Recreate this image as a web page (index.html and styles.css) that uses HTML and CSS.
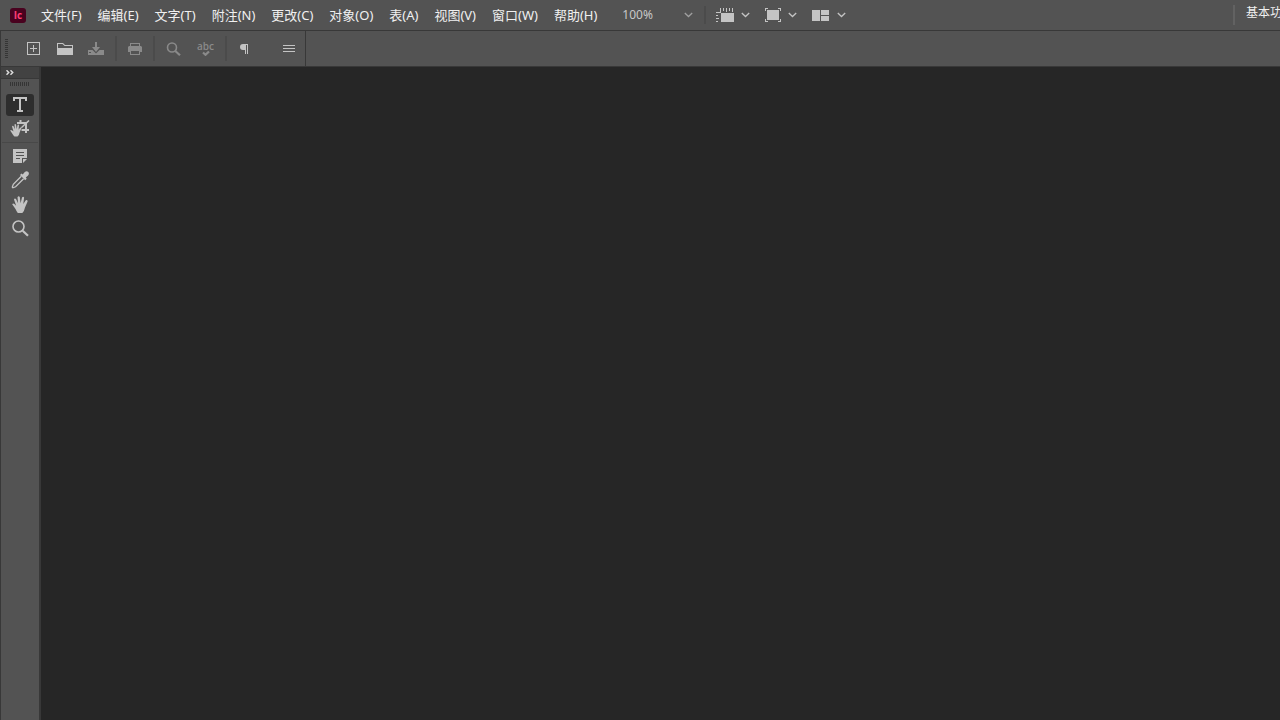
FILE: index.html
```html
<!DOCTYPE html>
<html lang="zh-CN">
<head>
<meta charset="utf-8">
<title>InCopy</title>
<link rel="stylesheet" href="styles.css">
</head>
<body>
<div class="app">
  <header class="menubar">
    <span class="logo">Ic</span>
    <nav class="menus">
      <button>文件(F)</button>
      <button>编辑(E)</button>
      <button>文字(T)</button>
      <button>附注(N)</button>
      <button>更改(C)</button>
      <button>对象(O)</button>
      <button>表(A)</button>
      <button>视图(V)</button>
      <button>窗口(W)</button>
      <button>帮助(H)</button>
    </nav>
    <button class="zoom" aria-label="缩放级别">
      <span>100%</span>
      <svg width="9" height="6" viewBox="0 0 9 6"><path class="line soft" d="M.8 1 4.5 4.5 8.2 1"/></svg>
    </button>
    <span class="divider"></span>
    <div class="views">
      <button aria-label="视图选项">
        <svg width="18" height="14" viewBox="0 0 18 14"><path d="M5 5h13v9H5zM0 4h4V0h1v5H0zM7 0h1v3H7zM10 0h1v4h-1zM13 0h1v3h-1zM16 0h1v4h-1zM0 7h2v1H0zM0 10h3v1H0zM0 13h2v1H0z"/></svg>
        <svg width="9" height="6" viewBox="0 0 9 6"><path class="line" d="M.8 1 4.5 4.5 8.2 1"/></svg>
      </button>
      <button aria-label="屏幕模式">
        <svg width="16" height="14" viewBox="0 0 16 14"><path d="M2 2h12v10H2zM0 0h3v1H1v2H0zM13 0h3v3h-1V1h-2zM0 11h1v2h2v1H0zM15 11h1v3h-3v-1h2z"/></svg>
        <svg width="9" height="6" viewBox="0 0 9 6"><path class="line" d="M.8 1 4.5 4.5 8.2 1"/></svg>
      </button>
      <button aria-label="排列文档">
        <svg width="17" height="11" viewBox="0 0 17 11"><path d="M0 0h8v11H0zM9 0h8v5H9zM9 6h8v5H9z"/></svg>
        <svg width="9" height="6" viewBox="0 0 9 6"><path class="line" d="M.8 1 4.5 4.5 8.2 1"/></svg>
      </button>
    </div>
    <button class="workspace"><span>基本功能</span></button>
  </header>

  <div class="toolbar">
    <span class="grip"></span>
    <div class="commands">
      <button aria-label="新建">
        <svg width="13" height="13" viewBox="0 0 13 13"><path fill-rule="evenodd" d="M0 0h13v13H0zM1 1v11h11V1zM6 3h1v3h3v1H7v3H6V7H3V6h3z"/></svg>
      </button>
      <button class="open" aria-label="打开">
        <svg width="16" height="12" viewBox="0 0 16 12"><path d="M0 0h6l2 2h8v3h-1V3H7.500L5.500 1H1v4H0zM1 5h15v7H0V5z"/></svg>
      </button>
      <button class="dim" aria-label="存储">
        <svg width="16" height="13" viewBox="0 0 16 13"><path fill-rule="evenodd" d="M7 0h2v5h3l-4 5-4-5h3zM0 8h4.500L8 11.500 11.500 8H16v5H0zM1 10v1h2v-1z"/></svg>
      </button>
    </div>
    <span class="divider"></span>
    <div class="commands">
      <button class="dim" aria-label="打印">
        <svg width="14" height="12" viewBox="0 0 14 12"><path fill-rule="evenodd" d="M2 0h10v3h-1V1H3v2H2zM1 3h12l1 1v5h-2V7H2v2H0V4zM2 7h10v5H2zM3 8v3h8V8z"/></svg>
      </button>
    </div>
    <span class="divider"></span>
    <div class="commands">
      <button class="dim" aria-label="查找">
        <svg width="15" height="14" viewBox="0 0 15 14"><circle class="ring" cx="6" cy="5.500" r="4.500"/><path class="thick" d="m9.300 9 4.700 4.200"/></svg>
      </button>
      <button class="dim spell" aria-label="拼写检查">
        <span>abc</span>
        <svg width="8" height="5" viewBox="0 0 8 5"><path class="thick" d="m1 1.500 2.500 2.300L7 .5"/></svg>
      </button>
    </div>
    <span class="divider"></span>
    <div class="commands last">
      <button aria-label="显示隐含的字符">
        <svg width="8" height="10" viewBox="0 0 8 10"><path d="M3 0h5v10H7V1H6v9H5V6H3a3 3 0 0 1 0-6z"/></svg>
      </button>
      <button aria-label="自定">
        <svg width="12" height="7" viewBox="0 0 12 7"><path d="M0 0h12v1H0zM0 3h12v1H0zM0 6h12v1H0z"/></svg>
      </button>
    </div>
  </div>

  <div class="body">
    <aside class="tools">
      <button class="expand" aria-label="展开面板">
        <svg width="8" height="5" viewBox="0 0 8 5"><path class="chevrons" d="m.5.300 2.200 2.200L.5 4.700M4.500.300l2.200 2.200-2.200 2.200"/></svg>
      </button>
      <span class="grip-h"></span>
      <button class="tool active" aria-label="文字工具">
        <svg width="14" height="16" viewBox="0 0 14 16"><path d="M0 0h14v4h-2V2H8v11h2v2H4v-2h2V2H2v2H0z"/></svg>
      </button>
      <button class="tool" aria-label="位置工具">
        <svg width="20" height="18" viewBox="0 0 20 18"><path d="M.2 10.500Q.8 9.300 2.200 10.500L3.500 11.500 2 6.500Q2.500 5.300 3.400 6L4.900 9.300 4.500 4.500Q5.200 3.400 6 4.500L6.700 9 7.600 4.800Q8.500 4.100 9 5.100L8.600 9.800 10.200 7.500Q11.300 7.100 11.400 8.300L9.700 12.300Q9.300 15 7.500 16.500H4.500Q3.500 15.500 2.500 14z"/><path fill-rule="evenodd" d="M7 2h2.500V0h2v2h4.800L18.500 0l1 1L17 3.500V9h2v2h-2v2h-2v-2h-3.500V9H15V5.200L11.800 8.200l-.9-1L14.200 4H7z"/></svg>
      </button>
      <hr>
      <button class="tool" aria-label="附注工具">
        <svg width="14" height="14" viewBox="0 0 14 14"><path fill-rule="evenodd" d="M0 0h14v9H9v5H0zM3 3v1h8V3zM3 6v1h8V6zM3 9v1h4V9zM10 10h4l-4 4z"/></svg>
      </button>
      <button class="tool" aria-label="吸管工具">
        <svg width="18" height="18" viewBox="0 0 18 18"><path d="m9 4 1.500-1.400 1.200.9L13.800 1q2-1.500 3.500.1 1.300 1.600-.2 3.300l-2.300 2.200.9 1.100-1.500 1.500z"/><path class="line" d="m10.300 5.300-8 8-1 2.800.6.700 2.700-1 8-8"/></svg>
      </button>
      <button class="tool" aria-label="抓手工具">
        <svg width="16" height="17" viewBox="0 0 16 17"><path d="M.2 8.300Q1 7 2.400 8.100L4.200 9.700 2 3.600Q2.500 1.700 4 2.900L6.100 7.300 5.500 1.300Q6.500-.6 7.800.9L8.600 7.200 10 1.400Q11.300 0 12.100 1.600L11.300 8 13.800 4.300Q15.600 3.600 15.600 5.400L13 11.500Q12.200 15.500 10.300 17H5.800Q4.600 15.500 3.500 13z"/></svg>
      </button>
      <button class="tool" aria-label="缩放显示工具">
        <svg width="17" height="17" viewBox="0 0 17 17"><circle class="ring" cx="6.500" cy="6.500" r="5.500"/><path class="thick" d="m10.700 10.700 5.300 5"/></svg>
      </button>
    </aside>
    <main class="canvas"></main>
  </div>
</div>
</body>
</html>
```
FILE: styles.css
```css
* {
  box-sizing: border-box;
}

body {
  margin: 0;
  overflow: hidden;
  background: #262626;
  color: #f0f0f0;
  font: 13px/16px "Noto Sans", "Noto Sans CJK SC", sans-serif;
}

button {
  display: flex;
  align-items: center;
  margin: 0;
  padding: 0;
  border: 0;
  background: none;
  color: inherit;
  font: inherit;
  white-space: nowrap;
}

svg {
  display: block;
  flex: none;
  fill: #c4c4c4;
}

.line,
.ring,
.thick,
.chevrons {
  fill: none;
  stroke: #c4c4c4;
  stroke-width: 1.3;
}

.soft {
  stroke: #a0a0a0;
}

.chevrons {
  stroke: #dcdcdc;
  stroke-width: 1.5;
}

.ring {
  stroke-width: 1.6;
}

.thick {
  stroke-width: 2.2;
}

.dim svg {
  fill: #8a8a8a;
}

.dim .ring,
.dim .thick {
  stroke: #8a8a8a;
}

.app {
  display: flex;
  flex-direction: column;
  height: 100vh;
}

.menubar {
  display: flex;
  align-items: center;
  flex: none;
  height: 31px;
  padding-left: 10px;
  border-bottom: 1px solid #383838;
  background: #535353;
}

.logo {
  flex: none;
  width: 16px;
  margin-right: 7px;
  border-radius: 3px;
  background: #49021f;
  color: #ff3d75;
  font: bold 10px/15px "Open Sans", sans-serif;
  text-align: center;
}

.menus {
  display: flex;
  padding-bottom: 1px;
}

.menus button {
  padding: 0 8px;
}

.zoom {
  justify-content: space-between;
  width: 71px;
  margin-left: 17px;
  color: #c8c8c8;
  font-size: 12px;
}

.divider {
  flex: none;
  width: 2px;
  height: 18px;
  background: #4b4b4b;
}

.menubar > .divider {
  margin: 0 10px 0 11px;
}

.views {
  display: flex;
  gap: 15px;
}

.views button {
  gap: 7px;
}

.views button:last-child {
  gap: 8px;
}

.workspace {
  width: 47px;
  height: 20px;
  margin-left: auto;
  padding: 0 0 4px 11px;
  border-left: 2px solid #626262;
  overflow: hidden;
  font-size: 12px;
}

.toolbar {
  display: flex;
  align-items: center;
  flex: none;
  height: 36px;
  padding-left: 4px;
  border-bottom: 1px solid #383838;
  border-left: 1px solid #383838;
  background: #535353;
}

.grip {
  width: 3px;
  height: 19px;
  margin-right: 19px;
  background: repeating-linear-gradient(#353535 0 1px, transparent 1px 2px);
}

.commands {
  display: flex;
  align-items: center;
  gap: 16px;
}

.open {
  padding-left: 1px;
}

.open + button {
  margin-left: -1px;
}

.toolbar .divider {
  height: 25px;
  margin: 0 11px;
}

.spell {
  flex-direction: column;
  color: #8a8a8a;
  font: 600 10px/10px "Open Sans", sans-serif;
}

.toolbar .last {
  align-self: stretch;
  gap: 35px;
  padding: 0 10px 0 2px;
  border-right: 1px solid #383838;
}

.body {
  display: flex;
  flex: 1;
  min-height: 0;
}

.tools {
  display: flex;
  flex-direction: column;
  align-items: center;
  flex: none;
  width: 41px;
  border: solid #383838;
  border-width: 0 2px 0 1px;
  background: #535353;
}

.expand {
  align-self: stretch;
  height: 12px;
  padding-left: 5px;
  border-bottom: 1px solid #383838;
  background: #424242;
}

.grip-h {
  width: 20px;
  height: 4px;
  margin: 3px 0 8px;
  background: repeating-linear-gradient(90deg, #353535 0 1px, transparent 1px 2px);
}

.tool {
  justify-content: center;
  width: 28px;
  height: 24px;
  border-radius: 3px;
}

.active {
  height: 22px;
  margin-bottom: 1px;
  background: #2d2d2d;
}

.tools hr {
  width: 36px;
  margin: 1px 0;
  border: 0;
  border-top: 1px solid #484848;
}

.canvas {
  flex: 1;
  background: #262626;
}
```
